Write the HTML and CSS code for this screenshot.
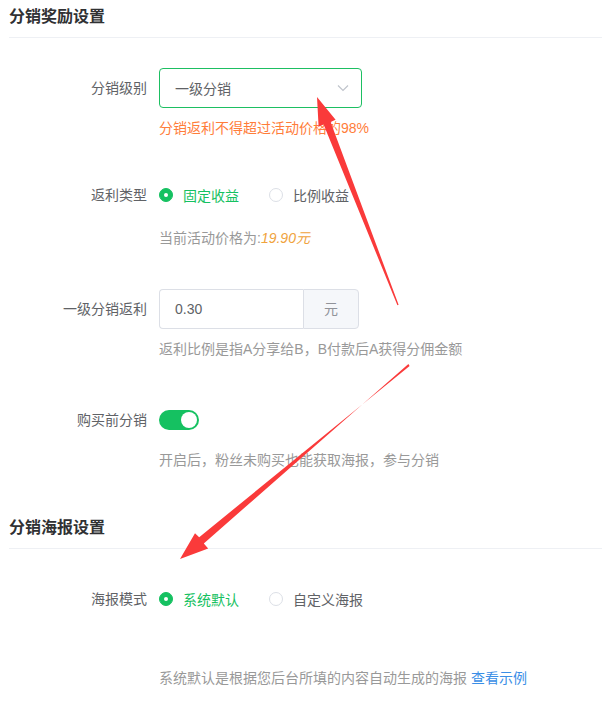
FILE: index.html
```html
<!DOCTYPE html>
<html lang="zh-CN">
<head>
<meta charset="utf-8">
<title>分销设置</title>
<link rel="stylesheet" href="styles.css">
</head>
<body>
<div class="page">
  <div class="section-title">分销奖励设置</div>

  <div class="form-item first">
    <div class="label">分销级别</div>
    <div class="field">
      <div class="select">
        <span>一级分销</span>
        <svg class="chev" width="12" height="8" viewBox="0 0 12 8"><path d="M1 1.5 L6 6.5 L11 1.5" fill="none" stroke="#c0c4cc" stroke-width="1.2"/></svg>
      </div>
      <div class="error">分销返利不得超过活动价格的98%</div>
    </div>
  </div>

  <div class="form-item gap-a">
    <div class="label">返利类型</div>
    <div class="field">
      <div class="radios">
        <label class="radio checked"><span class="dot"></span><span class="rtext">固定收益</span></label>
        <label class="radio"><span class="dot"></span><span class="rtext">比例收益</span></label>
      </div>
      <div class="hint hint-a">当前活动价格为:<em class="price">19.90元</em></div>
    </div>
  </div>

  <div class="form-item gap-b">
    <div class="label">一级分销返利</div>
    <div class="field">
      <div class="input-group">
        <div class="input">0.30</div>
        <div class="append">元</div>
      </div>
      <div class="hint hint-b">返利比例是指A分享给B，B付款后A获得分佣金额</div>
    </div>
  </div>

  <div class="form-item gap-b">
    <div class="label">购买前分销</div>
    <div class="field">
      <div class="switch-row"><span class="switch"><span class="knob"></span></span></div>
      <div class="hint hint-b">开启后，粉丝未购买也能获取海报，参与分销</div>
    </div>
  </div>

  <div class="section-title second">分销海报设置</div>

  <div class="form-item first">
    <div class="label">海报模式</div>
    <div class="field">
      <div class="radios">
        <label class="radio checked"><span class="dot"></span><span class="rtext">系统默认</span></label>
        <label class="radio"><span class="dot"></span><span class="rtext">自定义海报</span></label>
      </div>
      <div class="hint hint-c">系统默认是根据您后台所填的内容自动生成的海报 <a class="link">查看示例</a></div>
    </div>
  </div>

  <svg class="arrows" width="602" height="721" viewBox="0 0 602 721">
    <polygon fill="#fa3a3a" points="317,97 335.6,119.8 330.6,122.0 398.6,304.8 397.4,305.2 323.6,124.6 318.6,126.6"/>
    <polygon fill="#fa3a3a" points="180,559 195,533.3 199.2,537.2 409.6,365.9 408.4,364.1 203.8,543.4 208.2,548.5"/>
  </svg>
</div>
</body>
</html>
```

FILE: styles.css
```css
* { box-sizing: border-box; }
html, body { margin: 0; padding: 0; background: #fff; }
body {
  font-family: "Liberation Sans", "Noto Sans CJK SC", sans-serif;
  font-size: 14px;
  color: #606266;
}
.page {
  position: relative;
  width: 602px;
  height: 721px;
  padding-left: 9px;
  overflow: hidden;
}
.section-title {
  padding: 6px 0 9px;
  line-height: 22px;
  font-size: 16px;
  font-weight: bold;
  color: #303133;
  border-bottom: 1px solid #eef0f4;
}
.section-title.second { margin-top: 41px; }
.form-item {
  display: flex;
  align-items: flex-start;
}
.form-item.first { margin-top: 30px; }
.form-item.gap-a { margin-top: 37px; }
.form-item.gap-b { margin-top: 41px; }
.label {
  width: 138px;
  text-align: right;
  line-height: 40px;
  color: #606266;
  flex: none;
}
.field {
  margin-left: 12px;
  flex: 1;
}
.select {
  width: 203px;
  height: 40px;
  border: 1px solid #1dbf62;
  border-radius: 4px;
  display: flex;
  align-items: center;
  justify-content: space-between;
  padding: 0 12px 0 15px;
  color: #606266;
}
.chev { display: block; }
.error {
  margin-top: 10px;
  line-height: 20px;
  color: #ff7d3a;
}
.radios {
  display: flex;
  height: 40px;
  align-items: center;
}
.radio {
  display: flex;
  align-items: center;
  margin-right: 30px;
  color: #606266;
}
.radio .dot {
  width: 14px;
  height: 14px;
  border-radius: 50%;
  border: 1px solid #dcdfe6;
  background: #fff;
  margin-right: 10px;
  position: relative;
}
.radio.checked .dot {
  background: #15c161;
  border-color: #15c161;
}
.radio.checked .dot::after {
  content: "";
  position: absolute;
  left: 50%;
  top: 50%;
  width: 4px;
  height: 4px;
  margin: -2px 0 0 -2px;
  border-radius: 50%;
  background: #fff;
}
.radio.checked .rtext { color: #15c161; }
.hint {
  line-height: 20px;
  color: #999;
}
.hint-a { margin-top: 13px; }
.hint-b { margin-top: 10px; }
.hint-c { margin-top: 49px; }
.price {
  color: #f0a33c;
  font-style: italic;
}
.link { color: #3a8ee6; cursor: pointer; }
.input-group {
  display: flex;
  width: 200px;
  height: 40px;
}
.input {
  flex: 1;
  border: 1px solid #dcdfe6;
  border-right: none;
  border-radius: 4px 0 0 4px;
  padding-left: 15px;
  line-height: 38px;
  color: #606266;
}
.append {
  width: 56px;
  border: 1px solid #dcdfe6;
  border-radius: 0 4px 4px 0;
  background: #f5f7fa;
  color: #909399;
  text-align: center;
  line-height: 38px;
}
.switch-row {
  height: 40px;
  display: flex;
  align-items: center;
}
.switch {
  width: 40px;
  height: 20px;
  border-radius: 10px;
  background: #15c161;
  position: relative;
  display: block;
}
.knob {
  position: absolute;
  right: 2px;
  top: 2px;
  width: 16px;
  height: 16px;
  border-radius: 50%;
  background: #fff;
}
.arrows {
  position: absolute;
  left: 0;
  top: 0;
  pointer-events: none;
}
```
